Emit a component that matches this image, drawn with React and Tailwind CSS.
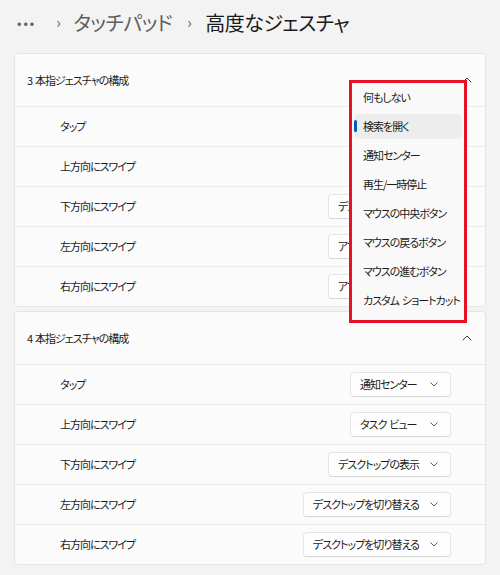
import React from 'react';

const font = "font-['Noto_Sans_CJK_JP','Noto_Sans',sans-serif] [font-feature-settings:'palt']";
const txt = 'text-[11px] tracking-[-1px] whitespace-pre';

const ChevronDown = () => (
  <svg width="8" height="5" viewBox="0 0 8 5" fill="none">
    <path d="M0.75 0.75L4 4L7.25 0.75" stroke="#5f5f5f" strokeWidth="1" strokeLinecap="round" strokeLinejoin="round" />
  </svg>
);

const ChevronUp = () => (
  <svg width="10" height="6" viewBox="0 0 10 6" fill="none">
    <path d="M1 5L5 1L9 5" stroke="#3a3a3a" strokeWidth="1" strokeLinecap="round" strokeLinejoin="round" />
  </svg>
);

const Select = ({ value }) => (
  <div className={`h-[25px] min-w-[101px] flex items-center justify-between gap-[11px] pl-[9px] pr-[12px] bg-[#fefefe] border border-[#e5e5e5] border-b-[#d6d6d6] rounded-[4px] text-[#1b1b1b] ${txt}`}>
    <span>{value}</span>
    <ChevronDown />
  </div>
);

const Card = ({ title, rows }) => (
  <div className="rounded-[4px] border border-[#e5e5e5] bg-[#fbfbfb]">
    <div className="h-[52px] flex items-center justify-between pl-[12px] pr-[13px]">
      <span className={`text-[#1b1b1b] ${txt}`}>{title}</span>
      <ChevronUp />
    </div>
    {rows.map((row, i) => (
      <div key={i} className="h-[40px] border-t border-[#ebebeb] flex items-center justify-between pl-[45px] pr-[34px]">
        <span className={`text-[#1b1b1b] ${txt}`}>{row.label}</span>
        <Select value={row.value} />
      </div>
    ))}
  </div>
);

const menuItems = [
  '何もしない',
  '検索を開く',
  '通知センター',
  '再生/一時停止',
  'マウスの中央ボタン',
  'マウスの戻るボタン',
  'マウスの進むボタン',
  'カスタム  ショートカット',
];

export default function App() {
  const three = [
    { label: 'タップ', value: '検索を開く' },
    { label: '上方向にスワイプ', value: 'タスク ビュー' },
    { label: '下方向にスワイプ', value: 'デスクトップの表示' },
    { label: '左方向にスワイプ', value: 'アプリを切り替える' },
    { label: '右方向にスワイプ', value: 'アプリを切り替える' },
  ];
  const four = [
    { label: 'タップ', value: '通知センター' },
    { label: '上方向にスワイプ', value: 'タスク  ビュー' },
    { label: '下方向にスワイプ', value: 'デスクトップの表示' },
    { label: '左方向にスワイプ', value: 'デスクトップを切り替える' },
    { label: '右方向にスワイプ', value: 'デスクトップを切り替える' },
  ];

  return (
    <div className={`w-[500px] h-[575px] bg-[#f3f3f3] relative overflow-hidden ${font}`}>
      <div className="h-[53px] flex items-center pl-[17px] pb-[8px] text-[20px] tracking-[-0.5px]">
        <span className="text-[#5f5f5f] tracking-[2px] text-[13px]">•••</span>
        <span className="text-[#5f5f5f] text-[15px] ml-[20px]">›</span>
        <span className="text-[#5f5f5f] ml-[13px]">タッチパッド</span>
        <span className="text-[#5f5f5f] text-[15px] ml-[15px]">›</span>
        <span className="text-[#1a1a1a] ml-[14px]">高度なジェスチャ</span>
      </div>

      <div className="px-[14px] flex flex-col gap-[4px]">
        <Card title="3  本指ジェスチャの構成" rows={three} />
        <Card title="4  本指ジェスチャの構成" rows={four} />
      </div>

      <div className="absolute left-[349px] top-[80px] w-[118px] h-[243px] border-[3px] border-[#e81123] bg-[#f9f9f9] px-[2px]">
        {menuItems.map((item, i) => (
          <div key={i} className="h-[29px] py-[2px]">
            <div className={`relative h-full flex items-center pl-[9px] rounded-[4px] text-[#1b1b1b] ${txt} ${i === 1 ? 'bg-[#ededed]' : ''}`}>
              {i === 1 && <div className="absolute left-0 top-[6px] w-[3px] h-[12px] rounded-full bg-[#005fb8]" />}
              {item}
            </div>
          </div>
        ))}
      </div>
    </div>
  );
}
